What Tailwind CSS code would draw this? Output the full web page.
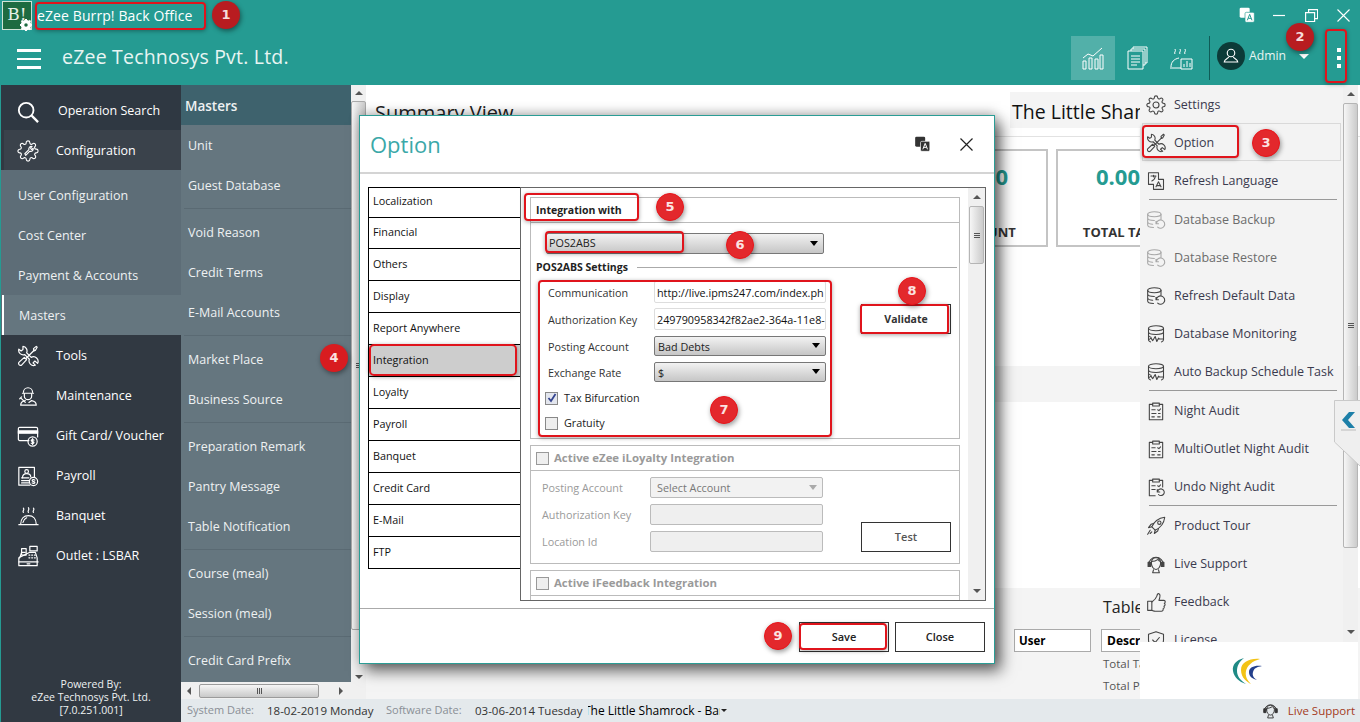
<!DOCTYPE html>
<html lang="en">
<head>
<meta charset="UTF-8">
<title>eZee Burrp! Back Office</title>
<script src="https://cdn.jsdelivr.net/npm/@tailwindcss/browser@4"></script>
</head>
<body class="bg-[#259b92]">
<svg class="absolute w-0 h-0">
  <symbol id="i-gear" viewBox="0 0 24 24" fill="none" stroke="currentColor" stroke-width="1.3" stroke-linecap="round" stroke-linejoin="round"><circle cx="12" cy="12" r="3.6"/><path d="M19.4 15a1.65 1.65 0 0 0 .33 1.82l.06.06a2 2 0 0 1 0 2.83 2 2 0 0 1-2.83 0l-.06-.06a1.65 1.65 0 0 0-1.82-.33 1.65 1.65 0 0 0-1 1.51V21a2 2 0 0 1-2 2 2 2 0 0 1-2-2v-.09A1.65 1.65 0 0 0 9 19.4a1.65 1.65 0 0 0-1.82.33l-.06.06a2 2 0 0 1-2.83 0 2 2 0 0 1 0-2.83l.06-.06a1.65 1.65 0 0 0 .33-1.82 1.65 1.65 0 0 0-1.51-1H3a2 2 0 0 1-2-2 2 2 0 0 1 2-2h.09A1.65 1.65 0 0 0 4.6 9a1.65 1.65 0 0 0-.33-1.82l-.06-.06a2 2 0 0 1 0-2.83 2 2 0 0 1 2.83 0l.06.06a1.65 1.65 0 0 0 1.82.33H9a1.65 1.65 0 0 0 1-1.51V3a2 2 0 0 1 2-2 2 2 0 0 1 2 2v.09a1.65 1.65 0 0 0 1 1.51 1.65 1.65 0 0 0 1.82-.33l.06-.06a2 2 0 0 1 2.83 0 2 2 0 0 1 0 2.83l-.06.06a1.65 1.65 0 0 0-.33 1.82V9a1.65 1.65 0 0 0 1.51 1H21a2 2 0 0 1 2 2 2 2 0 0 1-2 2h-.09a1.65 1.65 0 0 0-1.51 1z"/></symbol>
  <symbol id="i-cfg" viewBox="0 0 24 24" fill="none" stroke="currentColor" stroke-width="1.2" stroke-linecap="round" stroke-linejoin="round"><path d="M8.500 15l4.500-4.500a2.800 2.800 0 0 1 3.500-3.500l-1.800 1.800 1 1.500 2-1.300a2.800 2.800 0 0 1-3.700 3.200l-4.500 4.500z"/><path d="M19.4 15a1.65 1.65 0 0 0 .33 1.82l.06.06a2 2 0 0 1 0 2.83 2 2 0 0 1-2.83 0l-.06-.06a1.65 1.65 0 0 0-1.82-.33 1.65 1.65 0 0 0-1 1.51V21a2 2 0 0 1-2 2 2 2 0 0 1-2-2v-.09A1.65 1.65 0 0 0 9 19.4a1.65 1.65 0 0 0-1.82.33l-.06.06a2 2 0 0 1-2.83 0 2 2 0 0 1 0-2.83l.06-.06a1.65 1.65 0 0 0 .33-1.82 1.65 1.65 0 0 0-1.51-1H3a2 2 0 0 1-2-2 2 2 0 0 1 2-2h.09A1.65 1.65 0 0 0 4.6 9a1.65 1.65 0 0 0-.33-1.82l-.06-.06a2 2 0 0 1 0-2.83 2 2 0 0 1 2.83 0l.06.06a1.65 1.65 0 0 0 1.82.33H9a1.65 1.65 0 0 0 1-1.51V3a2 2 0 0 1 2-2 2 2 0 0 1 2 2v.09a1.65 1.65 0 0 0 1 1.51 1.65 1.65 0 0 0 1.82-.33l.06-.06a2 2 0 0 1 2.83 0 2 2 0 0 1 0 2.83l-.06.06a1.65 1.65 0 0 0-.33 1.82V9a1.65 1.65 0 0 0 1.51 1H21a2 2 0 0 1 2 2 2 2 0 0 1-2 2h-.09a1.65 1.65 0 0 0-1.51 1z"/></symbol>
  <symbol id="i-tools" viewBox="0 0 24 24" fill="none" stroke="currentColor" stroke-width="1.3" stroke-linecap="round" stroke-linejoin="round"><path d="M8 13.500l2.500 2.500-5.500 6a2.200 2.200 0 0 1-3-3z"/><path d="M10 14.500L19 5.500"/><path d="M18 4l3-2.500 1 1-2 3.500-1.500.5z"/><path d="M6.500 1.500V5L4.500 6.500 2 4.500A5 5 0 0 0 8.500 10.500L13.500 15.500A5 5 0 0 0 20 22L17.500 19.500 19.500 17.500 22.500 20A5 5 0 0 0 15.500 13.500L10.500 8.500A5 5 0 0 0 6.500 1.500z"/></symbol>
  <symbol id="i-person" viewBox="0 0 24 24" fill="none" stroke="currentColor" stroke-width="1.3" stroke-linecap="round" stroke-linejoin="round"><path d="M7 8a5 5 0 0 1 10 0"/><path d="M6 9h12"/><path d="M8 9.500v2.500a4 4 0 0 0 8 0V9.500"/><path d="M9 17c-3 .5-5 2-5 5h17c0-3-2-4.500-5-5l-3 2"/><path d="M4 14l5 5M3 15l2-2"/></symbol>
  <symbol id="i-card" viewBox="0 0 24 24" fill="none" stroke="currentColor" stroke-width="1.3" stroke-linecap="round" stroke-linejoin="round"><path d="M13 17H3a1.500 1.500 0 0 1-1.500-1.500V4A1.500 1.500 0 0 1 3 2.500h18A1.500 1.500 0 0 1 22.500 4v9"/><path d="M1.500 6.500h21v2.500h-21z" fill="currentColor"/><circle cx="17" cy="18" r="5"/><path d="M18.500 16.500c-1-1-3-.7-3 .5 0 1.500 3 .8 3 2.200 0 1.300-2 1.500-3 .5M17 14.800v6.400"/></symbol>
  <symbol id="i-pay" viewBox="0 0 24 24" fill="none" stroke="currentColor" stroke-width="1.3" stroke-linecap="round" stroke-linejoin="round"><path d="M14 22H2V2.500h17V13"/><circle cx="10.500" cy="7" r="2"/><path d="M6 14c0-3 2-4.500 4.500-4.500S15 11 15 13"/><path d="M5 14h8M5 17h8M5 19.500h8"/><circle cx="18" cy="18" r="4.500"/><path d="M19.500 16.500c-1-1-3-.6-3 .5 0 1.400 3 .7 3 2 0 1.200-2 1.400-3 .5"/></symbol>
  <symbol id="i-cloche" viewBox="0 0 24 24" fill="none" stroke="currentColor" stroke-width="1.3" stroke-linecap="round" stroke-linejoin="round"><path d="M2 21.500h21"/><path d="M4 21c0-6 3.500-9.500 8.500-9.500S21 15 21 21"/><path d="M6.500 19c.5-2.500 2-4 4-5"/><path d="M7 8c-1.500-1.500 1.500-2.500 0-4.500M12.500 8c-1.500-1.500 1.500-2.500 0-5M18 8c-1.500-1.500 1.500-2.500 0-4.500"/></symbol>
  <symbol id="i-reg" viewBox="0 0 24 24" fill="none" stroke="currentColor" stroke-width="1.3" stroke-linecap="round" stroke-linejoin="round"><path d="M3 14l2-6h4M14 8h6l2 6v8.500H2V14z"/><path d="M2 18.500h21M14 1.500h8v5h-8z"/><path d="M5 4h5v7H5z"/><path d="M13 11h1M16 11h1M19 11h1M13 14h1M16 14h1M19 14h1"/><path d="M11 20.500h3"/></symbol>
  <symbol id="i-db" viewBox="0 0 24 24" fill="none" stroke="currentColor" stroke-width="1.3" stroke-linecap="round" stroke-linejoin="round"><ellipse cx="10" cy="5" rx="8" ry="3"/><path d="M2 5v13c0 1.700 3 3 7 3M18 5v6M2 9.500c0 1.700 3.500 3 8 3M2 14c0 1.700 3 3 6 3"/><path d="M12.500 16a5 5 0 1 1 1.500 4.500M12 13.500V16.500H15"/></symbol>
  <symbol id="i-dbm" viewBox="0 0 24 24" fill="none" stroke="currentColor" stroke-width="1.3" stroke-linecap="round" stroke-linejoin="round"><ellipse cx="12" cy="5" rx="9" ry="3"/><path d="M3 5v14c0 1 1 2 2.500 2.500M21 5v14c0 1-1 2-2.500 2.500M3 9.500c0 1.700 4 3 9 3s9-1.300 9-3M3 13.500c0 1 1 2 3 2.500"/><path d="M3 19l3-2 2 3 3-5 2 6 2-4 1 1h5"/></symbol>
  <symbol id="i-clip" viewBox="0 0 24 24" fill="none" stroke="currentColor" stroke-width="1.3" stroke-linecap="round" stroke-linejoin="round"><path d="M8 4H4v18.500h16V4h-4"/><path d="M8 2.500h8V6H8z"/><path d="M7 10.500h4M14 10.500l1.500 1 2-2M7 15h5M15 15h2M7 19h3M14 19h3"/></symbol>
  <symbol id="i-undo" viewBox="0 0 24 24" fill="none" stroke="currentColor" stroke-width="1.3" stroke-linecap="round" stroke-linejoin="round"><path d="M8 4H4v18.500h7M16 4h4v8"/><path d="M8 2.500h8V6H8z"/><path d="M7 10.500h4M14 10.500l1.500 1 2-2M7 15h4"/><path d="M14 17.500a4 4 0 1 1 1 3.500M13.500 15v3h3"/></symbol>
  <symbol id="i-rocket" viewBox="0 0 24 24" fill="none" stroke="currentColor" stroke-width="1.3" stroke-linecap="round" stroke-linejoin="round"><path d="M7 13C10 6 15 2.500 22.500 1.500 21.500 9 18 14 11 17z"/><path d="M7 13l-4 1 3-4 3-1M11 17l-1 4 4-3 1-3"/><circle cx="16" cy="8" r="2"/><path d="M5 17l-3 5M7 19l-2 2"/></symbol>
  <symbol id="i-head" viewBox="0 0 24 24" fill="none" stroke="currentColor" stroke-width="1.3" stroke-linecap="round" stroke-linejoin="round"><path d="M3 13a9 9 0 1 1 18 0"/><path d="M6.500 11c0-4 2-6.500 5.500-6.500s5.500 2.500 5.500 6.500c0 4-2.500 7.500-5.500 7.500S6.500 15 6.500 11z"/><path d="M6.500 9c3 0 6-1 8-2.500 .5 1 1.500 2 3 2.500"/><path d="M2.500 10v5h3v-5zM18.500 10v5h3v-5z" fill="currentColor"/><path d="M9 19l-1 3.500h8l-1-3.500"/></symbol>
  <symbol id="i-thumb" viewBox="0 0 24 24" fill="none" stroke="currentColor" stroke-width="1.3" stroke-linecap="round" stroke-linejoin="round"><path d="M2 11h5v11H2z"/><path d="M7 12c3-2 5-4 6-7 .5-2 1-3.500 2.500-3 2 .8 1.500 4 0 8h6c2 0 2 3 .5 3.500 1.500 1 1 3-.5 3.500 1 1.500 0 3-1 3.200 .5 1.500-.5 2.800-2 2.800H11c-2 0-3-1-4-1"/></symbol>
  <symbol id="i-shield" viewBox="0 0 24 24" fill="none" stroke="currentColor" stroke-width="1.3" stroke-linecap="round" stroke-linejoin="round"><path d="M12 2l9 3v7c0 5-4 8-9 10-5-2-9-5-9-10V5z"/><path d="M8 12l3 3 5-6"/></symbol>
  <symbol id="i-lang" viewBox="0 0 24 24" fill="none" stroke="currentColor" stroke-width="1.3" stroke-linecap="round" stroke-linejoin="round"><path d="M3 2h12v8h6v12H9v-6H3z"/><path d="M6 6h6M9 5v2M7 12c2-1 4-3 4-5"/><path d="M12 19l3-6 3 6M13 17.500h4"/></symbol>
</svg>

<div class="relative w-[1360px] h-[722px] overflow-hidden bg-[#259b92] font-['Open_Sans',sans-serif] text-[12.5px]">

  <!-- title bar -->
  <header class="h-[85px] text-white">
    <div class="flex h-[38px] items-start">
      <div class="relative ml-[2px] mt-[1px] w-[30px] h-[29px] border border-[#cfe3d6] bg-[#1d6b41] font-['DejaVu_Serif',serif] text-[17px] leading-[25px] text-center text-[#e6efe6]">B!
        <svg class="absolute right-[-1px] bottom-[-2px] w-[12px] h-[12px] text-white" viewBox="0 0 24 24"><circle cx="12" cy="12" r="7" fill="none" stroke="currentColor" stroke-width="7"/><path d="M12 0v5M12 19v5M0 12h5M19 12h5M3 3l4 4M17 17l4 4M21 3l-4 4M7 17l-4 4" stroke="currentColor" stroke-width="4"/></svg>
      </div>
      <span class="ml-[5px] mt-[6px] text-[14px] leading-[20px] tracking-[0.1px]">eZee Burrp! Back Office</span>
      <div class="ml-auto mr-[10px] mt-[7px] flex items-center">
        <svg class="w-[16px] h-[16px]" viewBox="0 0 24 24"><rect x="1" y="1" width="15" height="15" rx="2" fill="#fff"/><rect x="9" y="8" width="14" height="15" rx="2" fill="#fff" stroke="#259b92"/><path d="M12.500 20l3.500-9 3.500 9M14 17h4" stroke="#259b92" fill="none" stroke-width="1.500"/></svg>
        <svg class="ml-[18px] w-[12px] h-[13px]" viewBox="0 0 12 13"><path d="M0 6.500h12" stroke="#fff" stroke-width="1.200"/></svg>
        <svg class="ml-[20px] w-[13px] h-[13px]" viewBox="0 0 13 13" fill="none" stroke="#fff" stroke-width="1.200"><path d="M.6 3.600h9v9h-9zM3.600 3.600V.6h9v9h-3"/></svg>
        <svg class="ml-[19px] w-[13px] h-[13px]" viewBox="0 0 13 13" fill="none" stroke="#fff" stroke-width="1.100"><path d="M.5.500l12 12M12.500.500l-12 12"/></svg>
      </div>
    </div>
    <div class="flex h-[47px] items-start">
      <div class="ml-[17px] mt-[11px] w-[24px] flex flex-col gap-[6px]">
        <div class="h-[2.500px] bg-white"></div><div class="h-[2.500px] bg-white"></div><div class="h-[2.500px] bg-white"></div>
      </div>
      <span class="ml-[21px] mt-[4px] text-[19.500px] leading-[30px] tracking-[0.2px] text-[#e8f5f3]">eZee Technosys Pvt. Ltd.</span>
      <div class="ml-auto mr-[19px] flex items-start">
        <div class="w-[44px] h-[44px] mt-[-2px] bg-[#52b0a9] flex items-center justify-center">
          <svg class="w-[24px] h-[24px]" viewBox="0 0 24 24" fill="none" stroke="#fff" stroke-width="1"><path d="M2 12L7 8l5 2 9-8"/><path d="M2 15h3v8H2zM8 12h3v11H8zM14 13h3v10h-3zM19 9h3v14h-3z"/></svg>
        </div>
        <div class="w-[44px] h-[44px] mt-[-2px] flex items-center justify-center">
          <svg class="w-[21px] h-[24px]" viewBox="0 0 21 24" fill="none" stroke="#fff" stroke-width="1"><path d="M1 5h15v18H1zM4 5V3h14v16h-2M6 3V1h14v16h-2"/><path d="M4 10h9M4 13h9M4 16h9M4 19h6"/></svg>
        </div>
        <div class="w-[44px] h-[44px] mt-[-2px] flex items-center justify-center">
          <svg class="w-[24px] h-[24px]" viewBox="0 0 24 24" fill="none" stroke="#fff" stroke-width="1"><path d="M1 22h11M2 21c0-5 3-8 8-9"/><path d="M6 8c-1.500-1.500 1.500-2.500 0-5M11 8c-1.500-1.500 1.500-2.500 0-5M16 8c-1.500-1.500 1.500-2.500 0-5"/><path d="M12 13h11v10H12zM15 21v-3M18 21v-6M21 21v-4"/></svg>
        </div>
        <div class="w-px h-[44px] mt-[-2px] ml-[6px] bg-[#0f5c57]"></div>
        <div class="ml-[7px] mt-[4px] w-[28px] h-[28px] rounded-full bg-[#0c3b38] flex items-center justify-center">
          <svg class="w-[18px] h-[18px]" viewBox="0 0 24 24" fill="none" stroke="#fff" stroke-width="1.500"><circle cx="12" cy="8" r="5"/><path d="M9 13c0 2-6 3-6 7h18c0-4-6-5-6-7"/></svg>
        </div>
        <span class="ml-[4px] mt-[9px] text-[12.200px] leading-[17px] text-[#e8f5f3]">Admin</span>
        <div class="ml-[13px] mt-[16px] w-[10px] h-[5px] border-x-[5px] border-x-transparent border-t-[5px] border-t-white"></div>
        <div class="ml-[28px] mt-[10px] w-[4px] flex flex-col gap-[4px]">
          <div class="w-[4px] h-[4px] bg-white"></div><div class="w-[4px] h-[4px] bg-white"></div><div class="w-[4px] h-[4px] bg-white"></div>
        </div>
      </div>
    </div>
  </header>

  <div class="flex h-[637px]">
    <!-- main menu -->
    <aside class="w-[180px] shrink-0 ml-px flex flex-col bg-[#313942] text-white text-[12.500px]">
      <div class="h-[45px] bg-[#2f3842] flex items-center pl-[16px] pt-[8px]">
        <svg class="w-[22px] h-[22px] text-white" viewBox="0 0 24 24" fill="none" stroke="currentColor" stroke-width="2"><circle cx="10" cy="10" r="8"/><path d="M16 16l7 7" stroke-width="2.500"/></svg>
        <span class="ml-[19px]">Operation Search</span>
      </div>
      <div class="h-[40px] ml-[3px] bg-[#3a424b] flex items-center pl-[13px] pt-[2px]">
        <svg class="w-[22px] h-[22px]"><use href="#i-cfg"/></svg><span class="ml-[17px]">Configuration</span>
      </div>
      <div class="h-[165px] bg-[#5d6d77] pt-[5px] text-[#eef1f2]">
        <div class="h-[40px] flex items-center pl-[17px] pt-[2px]">User Configuration</div>
        <div class="h-[40px] flex items-center pl-[17px] pt-[2px]">Cost Center</div>
        <div class="h-[40px] flex items-center pl-[17px] pt-[2px]">Payment &amp; Accounts</div>
        <div class="h-[40px] flex items-center pl-[15px] pt-[2px] ml-px border-l-2 border-white bg-[#65767f]">Masters</div>
      </div>
      <div class="h-[40px] flex items-center pl-[16px] pt-[2px]"><svg class="w-[22px] h-[22px]"><use href="#i-tools"/></svg><span class="ml-[17px]">Tools</span></div>
      <div class="h-[40px] flex items-center pl-[16px] pt-[2px]"><svg class="w-[22px] h-[22px]"><use href="#i-person"/></svg><span class="ml-[17px]">Maintenance</span></div>
      <div class="h-[40px] flex items-center pl-[16px] pt-[2px]"><svg class="w-[22px] h-[22px]"><use href="#i-card"/></svg><span class="ml-[17px]">Gift Card/ Voucher</span></div>
      <div class="h-[40px] flex items-center pl-[16px] pt-[2px]"><svg class="w-[22px] h-[22px]"><use href="#i-pay"/></svg><span class="ml-[17px]">Payroll</span></div>
      <div class="h-[40px] flex items-center pl-[16px] pt-[2px]"><svg class="w-[22px] h-[22px]"><use href="#i-cloche"/></svg><span class="ml-[17px]">Banquet</span></div>
      <div class="h-[40px] flex items-center pl-[16px] pt-[2px]"><svg class="w-[22px] h-[22px]"><use href="#i-reg"/></svg><span class="ml-[17px]">Outlet : LSBAR</span></div>
      <div class="mt-auto pb-[5px] text-center text-[10.500px] leading-[13px] text-[#eef1f2]">
        <div>Powered By:</div><div>eZee Technosys Pvt. Ltd.</div><div>[7.0.251.001]</div>
      </div>
    </aside>

    <div class="w-[1179px] flex flex-col">
      <div class="flex h-[614px]">
        <!-- sub menu -->
        <div class="w-[170px] flex flex-col shrink-0">
          <div class="h-[597px] bg-[#65767f] text-[#eef1f2] text-[12.500px]">
            <div class="h-[40px] bg-[#3e626d] flex items-center pl-[4px] pt-[2px] text-[13.500px] font-semibold">Masters</div>
            <div class="h-[40px] flex items-center pl-[7px] pt-[2px]">Unit</div>
            <div class="h-[40px] flex items-center pl-[7px] pt-[2px]">Guest Database</div>
            <div class="mt-[3px] ml-[3px] mb-[3px] h-px bg-[#5a6a73]"></div>
            <div class="h-[40px] flex items-center pl-[7px] pt-[2px]">Void Reason</div>
            <div class="h-[40px] flex items-center pl-[7px] pt-[2px]">Credit Terms</div>
            <div class="h-[40px] flex items-center pl-[7px] pt-[2px]">E-Mail Accounts</div>
            <div class="mt-[3px] ml-[3px] mb-[3px] h-px bg-[#5a6a73]"></div>
            <div class="h-[40px] flex items-center pl-[7px] pt-[2px]">Market Place</div>
            <div class="h-[40px] flex items-center pl-[7px] pt-[2px]">Business Source</div>
            <div class="mt-[3px] ml-[3px] mb-[3px] h-px bg-[#5a6a73]"></div>
            <div class="h-[40px] flex items-center pl-[7px] pt-[2px]">Preparation Remark</div>
            <div class="h-[40px] flex items-center pl-[7px] pt-[2px]">Pantry Message</div>
            <div class="h-[40px] flex items-center pl-[7px] pt-[2px]">Table Notification</div>
            <div class="mt-[3px] ml-[3px] mb-[3px] h-px bg-[#5a6a73]"></div>
            <div class="h-[40px] flex items-center pl-[7px] pt-[2px]">Course (meal)</div>
            <div class="h-[40px] flex items-center pl-[7px] pt-[2px]">Session (meal)</div>
            <div class="mt-[3px] ml-[3px] mb-[3px] h-px bg-[#5a6a73]"></div>
            <div class="h-[40px] flex items-center pl-[7px] pt-[2px]">Credit Card Prefix</div>
          </div>
          <!-- horizontal scrollbar -->
          <div class="h-[17px] bg-[#f0f0f0] flex items-center">
            <div class="ml-[6px] border-y-[4px] border-y-transparent border-r-[4px] border-r-[#555]"></div>
            <div class="ml-[8px] w-[120px] h-[14px] border border-[#9b9b9b] rounded-[2px] bg-gradient-to-b from-[#f6f6f6] to-[#c9c9c9] flex items-center justify-center gap-px">
              <div class="w-px h-[6px] bg-[#555]"></div><div class="w-px h-[6px] bg-[#555]"></div><div class="w-px h-[6px] bg-[#555]"></div>
            </div>
            <div class="ml-[20px] border-y-[4px] border-y-transparent border-l-[4px] border-l-[#555]"></div>
          </div>
        </div>
        <!-- vertical scrollbar -->
        <div class="w-[15px] shrink-0 flex flex-col bg-[#f0f0f0]">
          <div class="h-[16px] flex items-center justify-center"><div class="border-x-[4px] border-x-transparent border-b-[4px] border-b-[#555]"></div></div>
          <div class="h-[529px] border border-[#a9a9a9] rounded-[2px] bg-gradient-to-r from-[#f6f6f6] to-[#cbcbcb] flex flex-col items-center justify-center gap-px">
            <div class="w-[6px] h-px bg-[#555]"></div><div class="w-[6px] h-px bg-[#555]"></div><div class="w-[6px] h-px bg-[#555]"></div>
          </div>
          <div class="mt-[39px] h-[16px] flex items-center justify-center"><div class="border-x-[4px] border-x-transparent border-t-[4px] border-t-[#555]"></div></div>
        </div>
        <!-- dashboard behind the dialog -->
        <main class="flex-1 flex flex-col bg-white text-[#222]">
          <div class="h-[52px] border-b border-[#e2e2e2] flex items-start pl-[9px] pt-[7px]">
            <span class="w-[635px] shrink-0 pt-[3px] text-[20px] leading-[36px] text-[#222]">Summary View</span>
            <span class="h-[36px] w-[300px] pl-[2px] bg-[#f4f4f4] text-[19.500px] leading-[40px] text-[#111] whitespace-nowrap">The Little Shamrock</span>
          </div>
          <div class="mt-[12px] flex gap-[8px] pl-[30px]">
            <div class="w-[124px] h-[98px] shrink-0 border-2 border-[#c4c4c4]"></div>
            <div class="w-[124px] h-[98px] shrink-0 border-2 border-[#c4c4c4]"></div>
            <div class="w-[124px] h-[98px] shrink-0 border-2 border-[#c4c4c4]"></div>
            <div class="w-[124px] h-[98px] shrink-0 border-2 border-[#c4c4c4]"></div>
            <div class="w-[124px] h-[98px] shrink-0 border-2 border-[#c4c4c4] flex flex-col items-center text-center">
              <span class="mt-[10px] text-[22px] leading-[30px] font-bold text-[#259b92]">0.00</span>
              <span class="mt-[32px] text-[13px] leading-[18px] font-bold text-[#333]">AMOUNT</span>
            </div>
            <div class="w-[124px] h-[98px] shrink-0 border-2 border-[#c4c4c4] flex flex-col items-center text-center">
              <span class="mt-[10px] text-[22px] leading-[30px] font-bold text-[#259b92]">0.00</span>
              <span class="mt-[32px] text-[13px] leading-[18px] font-bold text-[#333]">TOTAL TAX</span>
            </div>
          </div>
          <div class="mt-[119px] h-[36px] bg-[#f4f4f4]"></div>
          <div class="mt-[186px] h-[111px] bg-[#f4f4f4] flex">
            <div class="w-[725px] pt-[41px] flex justify-end">
              <div class="h-[23px] w-[77px] bg-white border border-[#aaa] pl-[4px] text-[11.500px] leading-[21px] font-bold text-black">User</div>
            </div>
            <div class="ml-[10px] pt-[7px] w-[200px] text-[11.500px] text-[#555]">
              <div class="pl-[2px] text-[16px] leading-[24px] text-[#222]">Table</div>
              <div class="mt-[10px] h-[23px] bg-white border border-[#aaa] pl-[5px] text-[12px] leading-[21px] font-bold text-black">Description</div>
              <div class="mt-[3px] pl-[2px] leading-[17px]">Total Tax</div>
              <div class="mt-[5px] pl-[2px] leading-[17px]">Total Pay</div>
            </div>
          </div>
        </main>
      </div>
      <!-- status bar -->
      <footer class="h-[23px] bg-[#e4e9ec] flex items-center pl-[6px] text-[11.500px] text-[#333] whitespace-nowrap">
        <span class="w-[80px] text-[11px] text-[#8a8f96]">System Date:</span>
        <span class="w-[119px]">18-02-2019 Monday</span>
        <span class="w-[89px] text-[11px] text-[#8a8f96]">Software Date:</span>
        <span class="w-[113px]">03-06-2014 Tuesday</span>
        <div class="w-[132px] overflow-hidden text-[12px] text-black"><span class="ml-[-4px] inline-block">The Little Shamrock - Bar</span></div>
        <div class="ml-[1px] border-x-[3px] border-x-transparent border-t-[3px] border-t-[#222]"></div>
        <svg class="ml-auto w-[17px] h-[19px] text-[#333]"><use href="#i-head"/></svg>
        <span class="ml-[9px] mr-[5px] text-[#a33a1c]">Live Support</span>
      </footer>
    </div>
  </div>

  <!-- overflow menu -->
  <div class="absolute left-[1140px] top-[85px] w-[218px] h-[614px] flex flex-col bg-white">
    <div class="h-[557px] flex overflow-hidden">
      <nav class="w-[203px] bg-[#f3f3f3] overflow-hidden text-[12.500px] text-[#3a3a4e]">
        <div class="h-[38px] flex items-center pl-[6px] pt-[2px]"><svg class="w-[20px] h-[20px] text-[#444]"><use href="#i-gear"/></svg><span class="ml-[8px]">Settings</span></div>
        <div class="h-[38px] mx-[2px] flex items-center pl-[3px] pt-[2px] border border-[#d9d9d9]"><svg class="w-[20px] h-[20px] text-[#444]"><use href="#i-tools"/></svg><span class="ml-[8px]">Option</span></div>
        <div class="h-[38px] flex items-center pl-[6px] pt-[2px]"><svg class="w-[20px] h-[20px] text-[#444]"><use href="#i-lang"/></svg><span class="ml-[8px]">Refresh Language</span></div>
        <div class="mx-[9px] mr-[6px] h-px bg-[#999]"></div>
        <div class="h-[38px] flex items-center pl-[6px] pt-[2px] text-[#6c6c6c]"><svg class="w-[20px] h-[20px] text-[#a8a8a8]"><use href="#i-db"/></svg><span class="ml-[8px]">Database Backup</span></div>
        <div class="h-[38px] flex items-center pl-[6px] pt-[2px] text-[#6c6c6c]"><svg class="w-[20px] h-[20px] text-[#a8a8a8]"><use href="#i-db"/></svg><span class="ml-[8px]">Database Restore</span></div>
        <div class="h-[38px] flex items-center pl-[6px] pt-[2px]"><svg class="w-[20px] h-[20px] text-[#444]"><use href="#i-db"/></svg><span class="ml-[8px]">Refresh Default Data</span></div>
        <div class="h-[38px] flex items-center pl-[6px] pt-[2px]"><svg class="w-[20px] h-[20px] text-[#444]"><use href="#i-dbm"/></svg><span class="ml-[8px]">Database Monitoring</span></div>
        <div class="h-[38px] flex items-center pl-[6px] pt-[2px]"><svg class="w-[20px] h-[20px] text-[#444]"><use href="#i-dbm"/></svg><span class="ml-[8px]">Auto Backup Schedule Task</span></div>
        <div class="mx-[9px] mr-[6px] h-px bg-[#999]"></div>
        <div class="h-[38px] flex items-center pl-[6px] pt-[2px]"><svg class="w-[20px] h-[20px] text-[#444]"><use href="#i-clip"/></svg><span class="ml-[8px]">Night Audit</span></div>
        <div class="h-[38px] flex items-center pl-[6px] pt-[2px]"><svg class="w-[20px] h-[20px] text-[#444]"><use href="#i-clip"/></svg><span class="ml-[8px]">MultiOutlet Night Audit</span></div>
        <div class="h-[38px] flex items-center pl-[6px] pt-[2px]"><svg class="w-[20px] h-[20px] text-[#444]"><use href="#i-undo"/></svg><span class="ml-[8px]">Undo Night Audit</span></div>
        <div class="mx-[9px] mr-[6px] h-px bg-[#999]"></div>
        <div class="h-[38px] flex items-center pl-[6px] pt-[2px]"><svg class="w-[20px] h-[20px] text-[#444]"><use href="#i-rocket"/></svg><span class="ml-[8px]">Product Tour</span></div>
        <div class="h-[38px] flex items-center pl-[6px] pt-[2px]"><svg class="w-[20px] h-[20px] text-[#444]"><use href="#i-head"/></svg><span class="ml-[8px]">Live Support</span></div>
        <div class="h-[38px] flex items-center pl-[6px] pt-[2px]"><svg class="w-[20px] h-[20px] text-[#444]"><use href="#i-thumb"/></svg><span class="ml-[8px]">Feedback</span></div>
        <div class="h-[38px] flex items-center pl-[6px] pt-[2px]"><svg class="w-[20px] h-[20px] text-[#444]"><use href="#i-shield"/></svg><span class="ml-[8px]">License</span></div>
      </nav>
      <div class="w-[15px] bg-[#f0f0f0] flex flex-col">
        <div class="h-[18px] flex items-center justify-center"><div class="border-x-[4px] border-x-transparent border-b-[4px] border-b-[#555]"></div></div>
        <div class="h-[445px] border border-[#b5b5b5] rounded-[2px] bg-gradient-to-r from-[#f6f6f6] to-[#cbcbcb] flex flex-col items-center justify-center gap-px">
          <div class="w-[6px] h-px bg-[#555]"></div><div class="w-[6px] h-px bg-[#555]"></div><div class="w-[6px] h-px bg-[#555]"></div>
        </div>
        <div class="mt-auto h-[20px] flex items-center justify-center"><div class="border-x-[4px] border-x-transparent border-t-[4px] border-t-[#555]"></div></div>
      </div>
    </div>
    <div class="flex-1 flex items-center justify-center">
      <svg class="ml-[-2px] w-[32px] h-[28px]" viewBox="0 0 32 28"><path d="M12 1C4 3 0 8 1 14s6 11 13 13C8 23 5 19 5 14S7 5 12 1z" fill="#1f8a85"/><path d="M28 2C18 1 9 5 9 13s6 12 10 14c-4-4-6-8-5-13S20 4 28 2z" fill="#f3c316"/><path d="M30 9c-7-1-13 1-13 6s4 7 8 8c-3-2-5-4-4-8s4-5 9-6z" fill="#233f8c"/></svg>
    </div>
  </div>

  <!-- side tab -->
  <svg class="absolute left-[1334px] top-[400px] w-[26px] h-[66px]" viewBox="0 0 26 66">
    <path d="M26 .5H.5V42L26 66" fill="#efefef" stroke="#c9c9c9"/>
    <path d="M15 12L8 20l7 8h6l-7-8 7-8z" fill="#1d7fa8"/><path d="M7 30h15" stroke="#bbb"/>
  </svg>

  <!-- Option dialog -->
  <section class="absolute left-[359px] top-[115px] w-[636px] h-[549px] flex flex-col bg-white border border-[#2a9d95] text-[10.800px] text-[#222] shadow-[6px_7px_14px_rgba(0,0,0,0.6),0_-3px_10px_rgba(0,0,0,0.2)]">
    <div class="h-[58px] shrink-0 border-b-2 border-[#d4d4d4] flex items-center pl-[10px]">
      <span class="text-[22px] text-[#3aa8a8]">Option</span>
      <svg class="ml-auto w-[17px] h-[16px]" viewBox="0 0 24 24"><rect x="1" y="1" width="15" height="15" rx="2" fill="#333"/><rect x="9" y="8" width="14" height="15" rx="2" fill="#333" stroke="#fff"/><path d="M12.500 20l3.500-9 3.500 9M14 17h4" stroke="#fff" fill="none" stroke-width="1.500"/></svg>
      <svg class="ml-[29px] mr-[21px] w-[13px] h-[13px]" viewBox="0 0 13 13" fill="none" stroke="#222" stroke-width="1.200"><path d="M.5.500l12 12M12.500.500l-12 12"/></svg>
    </div>
    <div class="h-[434px] shrink-0 flex items-start pl-[8px] pt-[13px]">
      <!-- option list -->
      <ul class="w-[153px] shrink-0 border border-black border-b-0 text-[#111]">
        <li class="h-[30px] border-b border-black pl-[4px] leading-[26px]">Localization</li>
        <li class="h-[31px] border-b border-black pl-[4px] leading-[28px]">Financial</li>
        <li class="h-[32px] border-b border-black pl-[4px] leading-[30px]">Others</li>
        <li class="h-[32px] border-b border-black pl-[4px] leading-[30px]">Display</li>
        <li class="h-[32px] border-b border-black pl-[4px] leading-[30px]">Report Anywhere</li>
        <li class="h-[32px] border-b border-black pl-[4px] leading-[30px] bg-[#cdcdcd]">Integration</li>
        <li class="h-[32px] border-b border-black pl-[4px] leading-[30px]">Loyalty</li>
        <li class="h-[32px] border-b border-black pl-[4px] leading-[30px]">Payroll</li>
        <li class="h-[32px] border-b border-black pl-[4px] leading-[30px]">Banquet</li>
        <li class="h-[32px] border-b border-black pl-[4px] leading-[30px]">Credit Card</li>
        <li class="h-[32px] border-b border-black pl-[4px] leading-[30px]">E-Mail</li>
        <li class="h-[32px] border-b border-black pl-[4px] leading-[30px]">FTP</li>
      </ul>
      <!-- settings panel -->
      <div class="ml-[-1px] w-[466px] h-[414px] shrink-0 border border-[#666] flex overflow-hidden">
        <div class="w-[447px] shrink-0 pl-[9px] pt-[9px] overflow-hidden">
          <div class="w-[430px] h-[242px] border border-[#bbb]">
            <div class="h-[25px] border-b border-[#bbb] pl-[5px] font-bold leading-[25px] text-[10.500px]">Integration with</div>
            <div class="ml-[15px] mt-[10px] w-[278px] h-[21px] border border-[#777] rounded-[2px] bg-gradient-to-b from-[#f2f2f2] to-[#c6c6c6] flex items-center pl-[2px] pr-[5px]">POS2ABS<div class="ml-auto border-x-[4px] border-x-transparent border-t-[5px] border-t-black"></div></div>
            <div class="mt-[6px] ml-[5px] mr-[2px] flex items-center font-bold text-[10.500px]">POS2ABS Settings<div class="ml-[9px] flex-1 h-px bg-[#aaa]"></div></div>
            <div class="flex">
              <div class="ml-[17px] w-[279px]">
                <div class="mt-[5px] flex items-center h-[22px]"><span class="w-[106px] pt-[2px] text-[#333]">Communication</span><div class="w-[172px] h-[22px] border border-[#ddd] rounded-[2px] pl-[2px] leading-[21px] text-[#111] overflow-hidden whitespace-nowrap">http://live.ipms247.com/index.ph</div></div>
                <div class="mt-[5px] flex items-center h-[22px]"><span class="w-[106px] pt-[2px] text-[#333]">Authorization Key</span><div class="w-[172px] h-[22px] border border-[#ddd] rounded-[2px] pl-[2px] leading-[21px] text-[#111] overflow-hidden whitespace-nowrap">249790958342f82ae2-364a-11e8-</div></div>
                <div class="mt-[6px] flex items-center h-[20px]"><span class="w-[106px] pt-[2px] text-[#333]">Posting Account</span><div class="w-[172px] h-[20px] border border-[#777] rounded-[2px] bg-gradient-to-b from-[#f2f2f2] to-[#c6c6c6] flex items-center pl-[3px] pr-[5px]"><span class="pt-[2px]">Bad Debts</span><div class="ml-auto border-x-[4px] border-x-transparent border-t-[5px] border-t-black"></div></div></div>
                <div class="mt-[6px] flex items-center h-[20px]"><span class="w-[106px] pt-[3px] text-[#333]">Exchange Rate</span><div class="w-[172px] h-[20px] border border-[#777] rounded-[2px] bg-gradient-to-b from-[#f2f2f2] to-[#c6c6c6] flex items-center pl-[3px] pr-[5px]"><span class="pt-[2px]">$</span><div class="ml-auto border-x-[4px] border-x-transparent border-t-[5px] border-t-black"></div></div></div>
                <div class="mt-[10px] ml-[-3px] flex items-center h-[13px]"><div class="w-[13px] h-[13px] border border-[#888] bg-[#e3e6ee] flex items-center justify-center"><svg class="w-[10px] h-[10px]" viewBox="0 0 10 10" fill="none" stroke="#34448f" stroke-width="1.800"><path d="M1.500 5l2.500 3 4.500-7"/></svg></div><span class="ml-[6px]">Tax Bifurcation</span></div>
                <div class="mt-[12px] ml-[-3px] flex items-center h-[13px]"><div class="w-[13px] h-[13px] border border-[#888] bg-[#eeeeee]"></div><span class="ml-[6px]">Gratuity</span></div>
              </div>
              <div class="ml-[34px] mt-[28px] w-[90px] h-[30px] border border-[#333] flex items-center justify-center pt-[2px] font-bold text-[10.500px] text-[#333]">Validate</div>
            </div>
          </div>
          <div class="mt-[6px] w-[430px] h-[119px] border border-[#bbb] text-[#9a9a9a]">
            <div class="h-[25px] border-b border-[#bbb] pl-[5px] flex items-center font-bold text-[11.400px]"><div class="w-[13px] h-[13px] border border-[#999] bg-[#efefef]"></div><span class="ml-[5px]">Active eZee iLoyalty Integration</span></div>
            <div class="flex">
              <div class="ml-[11px] w-[281px]">
                <div class="mt-[6px] flex items-center h-[21px]"><span class="w-[108px] pt-[2px]">Posting Account</span><div class="w-[173px] h-[21px] border border-[#bbb] rounded-[2px] bg-[#f2f2f2] flex items-center pl-[6px] pr-[5px] text-[#777]"><span class="pt-[2px]">Select Account</span><div class="ml-auto border-x-[4px] border-x-transparent border-t-[5px] border-t-[#aaa]"></div></div></div>
                <div class="mt-[6px] flex items-center h-[21px]"><span class="w-[108px] pt-[2px]">Authorization Key</span><div class="w-[173px] h-[21px] border border-[#bbb] rounded-[2px] bg-[#efefef]"></div></div>
                <div class="mt-[6px] flex items-center h-[21px]"><span class="w-[108px] pt-[2px]">Location Id</span><div class="w-[173px] h-[21px] border border-[#bbb] rounded-[2px] bg-[#efefef]"></div></div>
              </div>
              <div class="ml-[38px] mt-[51px] w-[90px] h-[30px] border border-[#333] flex items-center justify-center font-semibold text-[11px] text-[#555]">Test</div>
            </div>
          </div>
          <div class="mt-[6px] w-[430px] h-[60px] border border-[#bbb] text-[#9a9a9a]">
            <div class="h-[25px] border-b border-[#bbb] pl-[5px] flex items-center font-bold text-[11.400px]"><div class="w-[13px] h-[13px] border border-[#999] bg-[#efefef]"></div><span class="ml-[5px]">Active iFeedback Integration</span></div>
          </div>
        </div>
        <!-- panel scrollbar -->
        <div class="w-[17px] shrink-0 bg-[#f0f0f0] flex flex-col">
          <div class="h-[18px] flex items-center justify-center"><div class="border-x-[4px] border-x-transparent border-b-[4px] border-b-[#555]"></div></div>
          <div class="h-[58px] mx-px border border-[#b5b5b5] rounded-[2px] bg-gradient-to-r from-[#f6f6f6] to-[#cbcbcb] flex flex-col items-center justify-center gap-px">
            <div class="w-[6px] h-px bg-[#555]"></div><div class="w-[6px] h-px bg-[#555]"></div><div class="w-[6px] h-px bg-[#555]"></div>
          </div>
          <div class="mt-auto h-[18px] flex items-center justify-center"><div class="border-x-[4px] border-x-transparent border-t-[4px] border-t-[#555]"></div></div>
        </div>
      </div>
    </div>
    <div class="flex-1 border-t border-[#aaa] flex justify-end gap-[6px] pt-[13px] pr-[9px]">
      <div class="w-[90px] h-[30px] border border-[#333] flex items-center justify-center font-semibold text-[11px]">Save</div>
      <div class="w-[90px] h-[30px] border border-[#333] flex items-center justify-center font-semibold text-[11px]">Close</div>
    </div>
  </section>

  <!-- callout outlines -->
  <div class="absolute left-[35px] top-[2px] w-[171px] h-[28px] border-2 border-[#e0141c] rounded-[4px] shadow-[0_1px_4px_rgba(0,0,0,0.35)]"></div>
  <div class="absolute left-[1325px] top-[29px] w-[22px] h-[54px] border-2 border-[#e0141c] rounded-[4px] shadow-[0_1px_4px_rgba(0,0,0,0.35)]"></div>
  <div class="absolute left-[1142px] top-[125px] w-[97px] h-[33px] border-2 border-[#e0141c] rounded-[4px] shadow-[0_1px_4px_rgba(0,0,0,0.35)]"></div>
  <div class="absolute left-[524px] top-[193px] w-[115px] h-[28px] border-2 border-[#e0141c] rounded-[4px] shadow-[0_1px_4px_rgba(0,0,0,0.35)]"></div>
  <div class="absolute left-[545px] top-[231px] w-[139px] h-[22px] border-2 border-[#e0141c] rounded-[4px] shadow-[0_1px_4px_rgba(0,0,0,0.35)]"></div>
  <div class="absolute left-[538px] top-[280px] w-[294px] h-[157px] border-2 border-[#e0141c] rounded-[4px] shadow-[0_1px_4px_rgba(0,0,0,0.35)]"></div>
  <div class="absolute left-[369px] top-[344px] w-[148px] h-[32px] border-2 border-[#e0141c] rounded-[5px] shadow-[0_1px_4px_rgba(0,0,0,0.35)]"></div>
  <div class="absolute left-[860px] top-[304px] w-[89px] h-[30px] border-2 border-[#e0141c] rounded-[3px] shadow-[0_1px_4px_rgba(0,0,0,0.35)]"></div>
  <div class="absolute left-[799px] top-[623px] w-[88px] h-[27px] border-2 border-[#e0141c] rounded-[4px] shadow-[0_1px_4px_rgba(0,0,0,0.35)]"></div>

  <!-- numbered badges -->
  <div class="absolute left-[212px] top-[1px] w-[28px] h-[28px] rounded-full bg-[#b81c20] flex items-center justify-center font-['DejaVu_Sans',sans-serif] font-bold text-[13px] text-[#f6dcdc] shadow-[1px_2px_5px_rgba(0,0,0,0.45)]">1</div>
  <div class="absolute left-[1286px] top-[23px] w-[28px] h-[28px] rounded-full bg-[#b81c20] flex items-center justify-center font-['DejaVu_Sans',sans-serif] font-bold text-[13px] text-[#f6dcdc] shadow-[1px_2px_5px_rgba(0,0,0,0.45)]">2</div>
  <div class="absolute left-[1252px] top-[129px] w-[28px] h-[28px] rounded-full bg-[#e3282c] border border-[#e9141a] flex items-center justify-center font-['DejaVu_Sans',sans-serif] font-bold text-[13px] text-[#fbe3e3] shadow-[1px_2px_5px_rgba(0,0,0,0.4)]">3</div>
  <div class="absolute left-[320px] top-[344px] w-[28px] h-[28px] rounded-full bg-[#d81c20] flex items-center justify-center font-['DejaVu_Sans',sans-serif] font-bold text-[13px] text-[#fbe3e3] shadow-[1px_2px_5px_rgba(0,0,0,0.4)]">4</div>
  <div class="absolute left-[656px] top-[193px] w-[28px] h-[28px] rounded-full bg-[#e3282c] border border-[#e9141a] flex items-center justify-center font-['DejaVu_Sans',sans-serif] font-bold text-[13px] text-[#fbe3e3] shadow-[1px_2px_5px_rgba(0,0,0,0.4)]">5</div>
  <div class="absolute left-[726px] top-[231px] w-[28px] h-[28px] rounded-full bg-[#e3282c] border border-[#e9141a] flex items-center justify-center font-['DejaVu_Sans',sans-serif] font-bold text-[13px] text-[#fbe3e3] shadow-[1px_2px_5px_rgba(0,0,0,0.4)]">6</div>
  <div class="absolute left-[710px] top-[396px] w-[28px] h-[28px] rounded-full bg-[#e3282c] border border-[#e9141a] flex items-center justify-center font-['DejaVu_Sans',sans-serif] font-bold text-[13px] text-[#fbe3e3] shadow-[1px_2px_5px_rgba(0,0,0,0.4)]">7</div>
  <div class="absolute left-[898px] top-[277px] w-[28px] h-[28px] rounded-full bg-[#e3282c] border border-[#e9141a] flex items-center justify-center font-['DejaVu_Sans',sans-serif] font-bold text-[13px] text-[#fbe3e3] shadow-[1px_2px_5px_rgba(0,0,0,0.4)]">8</div>
  <div class="absolute left-[764px] top-[622px] w-[28px] h-[28px] rounded-full bg-[#e3282c] border border-[#e9141a] flex items-center justify-center font-['DejaVu_Sans',sans-serif] font-bold text-[13px] text-[#fbe3e3] shadow-[1px_2px_5px_rgba(0,0,0,0.4)]">9</div>
</div>
</body>
</html>
